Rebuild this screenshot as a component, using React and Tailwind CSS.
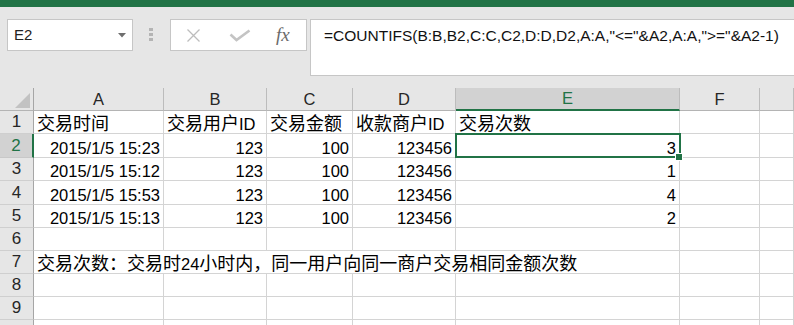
import React from "react";

const CJK = /[\u3000-\u9fff\uff00-\uffef]/;

function T({ s }) {
  const parts = s.split(/([\u3000-\u9fff\uff00-\uffef]+)/).filter((p) => p !== "");
  return (
    <>
      {parts.map((p, i) =>
        CJK.test(p) ? (
          <span key={i} className="text-[18px]">
            {p}
          </span>
        ) : (
          <span key={i}>{p}</span>
        )
      )}
    </>
  );
}

function Cell({ children, right, span5 }) {
  return (
    <div
      className={
        "bg-white border-r border-b border-[#d4d4d4] flex items-end whitespace-nowrap px-[3px] text-black " +
        (right ? "justify-end " : "justify-start ") +
        (span5 ? "col-span-5" : "")
      }
    >
      {children ? <span className="leading-[18px]">{children}</span> : null}
    </div>
  );
}

function RowHead({ n, selected }) {
  return selected ? (
    <div className="bg-[#d2d2d2] border-r-2 border-r-[#217346] border-b border-b-[#c8c8c8] flex items-center justify-center text-[#217346] text-[17px]">
      {n}
    </div>
  ) : (
    <div className="bg-[#e6e6e6] border-r border-r-[#a6a6a6] border-b border-b-[#cfcfcf] flex items-center justify-center text-[#262626] text-[17px]">
      {n}
    </div>
  );
}

function ColHead({ l, selected }) {
  return selected ? (
    <div className="bg-[#d2d2d2] border-r border-r-[#bcbcbc] border-b-2 border-b-[#217346] flex items-center justify-center text-[#217346] text-[16.5px]">
      {l}
    </div>
  ) : (
    <div className="bg-[#e6e6e6] border-r border-r-[#bcbcbc] border-b border-b-[#b4b4b4] flex items-center justify-center text-[#262626] text-[16.5px]">
      {l}
    </div>
  );
}

const data = [
  ["2015/1/5 15:23", "123", "100", "123456", "3"],
  ["2015/1/5 15:12", "123", "100", "123456", "1"],
  ["2015/1/5 15:53", "123", "100", "123456", "4"],
  ["2015/1/5 15:13", "123", "100", "123456", "2"],
];

export default function App() {
  return (
    <div className="w-[794px] h-[325px] overflow-hidden bg-[#e6e6e6] font-['Liberation_Sans','Noto_Sans_CJK_SC',sans-serif]">
      <div className="h-[7px] bg-[#217346]" />
      <div className="flex items-start h-[81px] pt-[12px] pl-[7px]">
        <div className="w-[126px] h-[32px] shrink-0 border border-[#c6c6c6] bg-white flex items-center justify-between pl-[6px] pr-[6px]">
          <span className="text-[15px] text-[#222] leading-[20px]">E2</span>
          <svg width="8" height="5" viewBox="0 0 8 5">
            <polygon points="0,0 8,0 4,4.5" fill="#6e6e6e" />
          </svg>
        </div>
        <div className="ml-[16px] mt-[9px] flex flex-col gap-[2px] shrink-0">
          <div className="w-[4px] h-[3px] bg-[#b4b4b4]" />
          <div className="w-[4px] h-[3px] bg-[#b4b4b4]" />
          <div className="w-[4px] h-[3px] bg-[#b4b4b4]" />
        </div>
        <div className="ml-[17px] w-[137px] h-[32px] shrink-0 border border-[#c6c6c6] bg-white flex items-center">
          <svg className="ml-[15px]" width="15" height="15" viewBox="0 0 15 15">
            <path d="M1.5 1.5 L13.5 13.5 M13.5 1.5 L1.5 13.5" stroke="#bdbdbd" strokeWidth="1.3" fill="none" />
          </svg>
          <svg className="ml-[28px]" width="22" height="13" viewBox="0 0 22 13">
            <path d="M1.5 5.5 L7.5 11 L20.5 1.5" stroke="#c4c4c4" strokeWidth="2.6" fill="none" />
          </svg>
          <span className="ml-[25px] font-['Liberation_Serif',serif] italic text-[19px] text-[#6b6b6b] leading-[20px]">
            fx
          </span>
        </div>
        <div className="ml-[3px] flex-1 h-[57px] border border-r-0 border-[#c6c6c6] bg-white pl-[13px] pt-[6px] text-[15.5px] leading-[20px] text-[#111] whitespace-nowrap">
          =COUNTIFS(B:B,B2,C:C,C2,D:D,D2,A:A,"&lt;="&amp;A2,A:A,"&gt;="&amp;A2-1)
        </div>
      </div>

      <div className="relative">
        <div className="grid grid-cols-[34px_130px_103px_86px_103px_224px_80px_1fr] grid-rows-[23px_23px_24px_23px_24px_23px_23px_23px_23px_23px_23px] text-[16.5px]">
          <div className="bg-[#e6e6e6] border-r border-r-[#a6a6a6] border-b border-b-[#b4b4b4] flex items-end justify-end pr-[3px] pb-[2px]">
            <svg width="15" height="15" viewBox="0 0 15 15">
              <polygon points="15,0 15,15 0,15" fill="#c2c2c2" />
            </svg>
          </div>
          <ColHead l="A" />
          <ColHead l="B" />
          <ColHead l="C" />
          <ColHead l="D" />
          <ColHead l="E" selected />
          <ColHead l="F" />
          <ColHead l="" />

          <RowHead n="1" />
          <Cell><T s="交易时间" /></Cell>
          <Cell><T s="交易用户ID" /></Cell>
          <Cell><T s="交易金额" /></Cell>
          <Cell><T s="收款商户ID" /></Cell>
          <Cell><T s="交易次数" /></Cell>
          <Cell />
          <Cell />

          {data.map((r, i) => (
            <React.Fragment key={i}>
              <RowHead n={String(i + 2)} selected={i === 0} />
              {r.map((v, j) => (
                <Cell key={j} right>
                  {v}
                </Cell>
              ))}
              <Cell />
              <Cell />
            </React.Fragment>
          ))}

          <RowHead n="6" />
          <Cell /><Cell /><Cell /><Cell /><Cell /><Cell /><Cell />

          <RowHead n="7" />
          <Cell span5><T s="交易次数：交易时24小时内，同一用户向同一商户交易相同金额次数" /></Cell>
          <Cell /><Cell />

          {["8", "9", ""].map((n, k) => (
            <React.Fragment key={k}>
              <RowHead n={n} />
              <Cell /><Cell /><Cell /><Cell /><Cell /><Cell /><Cell />
            </React.Fragment>
          ))}
        </div>
        <div className="absolute left-[455px] top-[45px] w-[226px] h-[25px] border-2 border-[#217346]" />
        <div className="absolute left-[676px] top-[66px] w-[6px] h-[6px] bg-[#217346] ring-1 ring-white" />
      </div>
    </div>
  );
}
